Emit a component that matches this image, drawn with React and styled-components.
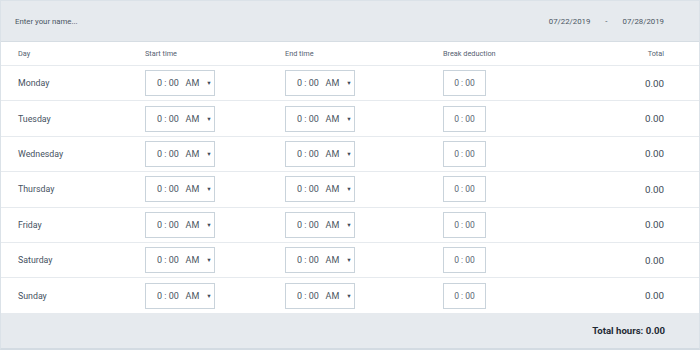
import React from "react";
import styled, { createGlobalStyle } from "styled-components";

const Global = createGlobalStyle`
  html, body { margin: 0; padding: 0; background: #fff; }
  body { font-family: Roboto, "Liberation Sans", Arial, sans-serif; }
  * { box-sizing: border-box; }
`;

const Sheet = styled.div`
  width: 700px;
  border: 1px solid #dbe2e8;
  border-bottom: 2px solid #d3dbe2;
  background: #fff;
`;

const TopBar = styled.div`
  height: 41px;
  background: #e6eaee;
  border-bottom: 1px solid #d6dde3;
  display: flex;
  align-items: center;
  padding: 0 35px 0 14px;
  font-size: 7.8px;
  color: #4a5663;
`;

const NameInput = styled.input`
  flex: 1;
  border: none;
  background: transparent;
  font: inherit;
  color: #4a5663;
  padding: 0;
  outline: none;
  &::placeholder { color: #4a5663; }
`;

const DateRange = styled.div`
  display: flex;
  align-items: center;
  gap: 15px;
`;

const Grid = styled.div`
  display: grid;
  grid-template-columns: 127px 140px 158px 1fr auto;
  align-items: center;
  padding: 0 35px 0 17px;
  height: ${(p) => p.$h};
  border-bottom: 1px solid #e6eaee;
`;

const HeadCell = styled.div`
  font-size: 7.3px;
  color: #556271;
  text-align: ${(p) => (p.$right ? "right" : "left")};
`;

const DayName = styled.div`
  font-size: 8.8px;
  color: #46525f;
`;

const TimeBox = styled.div`
  width: 70px;
  height: 26px;
  border: 1px solid #c9d3db;
  display: flex;
  align-items: center;
  padding-left: 11px;
  font-size: 9px;
  color: #4a5663;
  white-space: pre;
`;

const Caret = styled.span`
  font-size: 5.5px;
  margin-left: 7px;
  color: #3e4b58;
`;

const BreakBox = styled.div`
  width: 43px;
  height: 26px;
  border: 1px solid #c9d3db;
  display: flex;
  align-items: center;
  justify-content: center;
  font-size: 8.5px;
  color: #5a6673;
  white-space: pre;
`;

const Total = styled.div`
  font-size: 9.8px;
  color: #3e4b58;
  text-align: right;
`;

const Footer = styled.div`
  height: 34px;
  background: #e6eaee;
  display: flex;
  align-items: center;
  justify-content: flex-end;
  padding-right: 34px;
  font-size: 9.6px;
  font-weight: 700;
  color: #1f2a35;
`;

const days = ["Monday", "Tuesday", "Wednesday", "Thursday", "Friday", "Saturday", "Sunday"];

function Time() {
  return (
    <TimeBox>
      {"0 : 00   AM"}
      <Caret>▼</Caret>
    </TimeBox>
  );
}

export default function App() {
  return (
    <>
      <Global />
      <Sheet>
        <TopBar>
          <NameInput placeholder="Enter your name..." />
          <DateRange>
            <span>07/22/2019</span>
            <span>-</span>
            <span>07/28/2019</span>
          </DateRange>
        </TopBar>
        <Grid $h="24px">
          <HeadCell>Day</HeadCell>
          <HeadCell>Start time</HeadCell>
          <HeadCell>End time</HeadCell>
          <HeadCell>Break deduction</HeadCell>
          <HeadCell $right>Total</HeadCell>
        </Grid>
        {days.map((d) => (
          <Grid key={d} $h="35.4px">
            <DayName>{d}</DayName>
            <Time />
            <Time />
            <BreakBox>{"0 : 00"}</BreakBox>
            <Total>0.00</Total>
          </Grid>
        ))}
        <Footer>Total hours: 0.00</Footer>
      </Sheet>
    </>
  );
}
